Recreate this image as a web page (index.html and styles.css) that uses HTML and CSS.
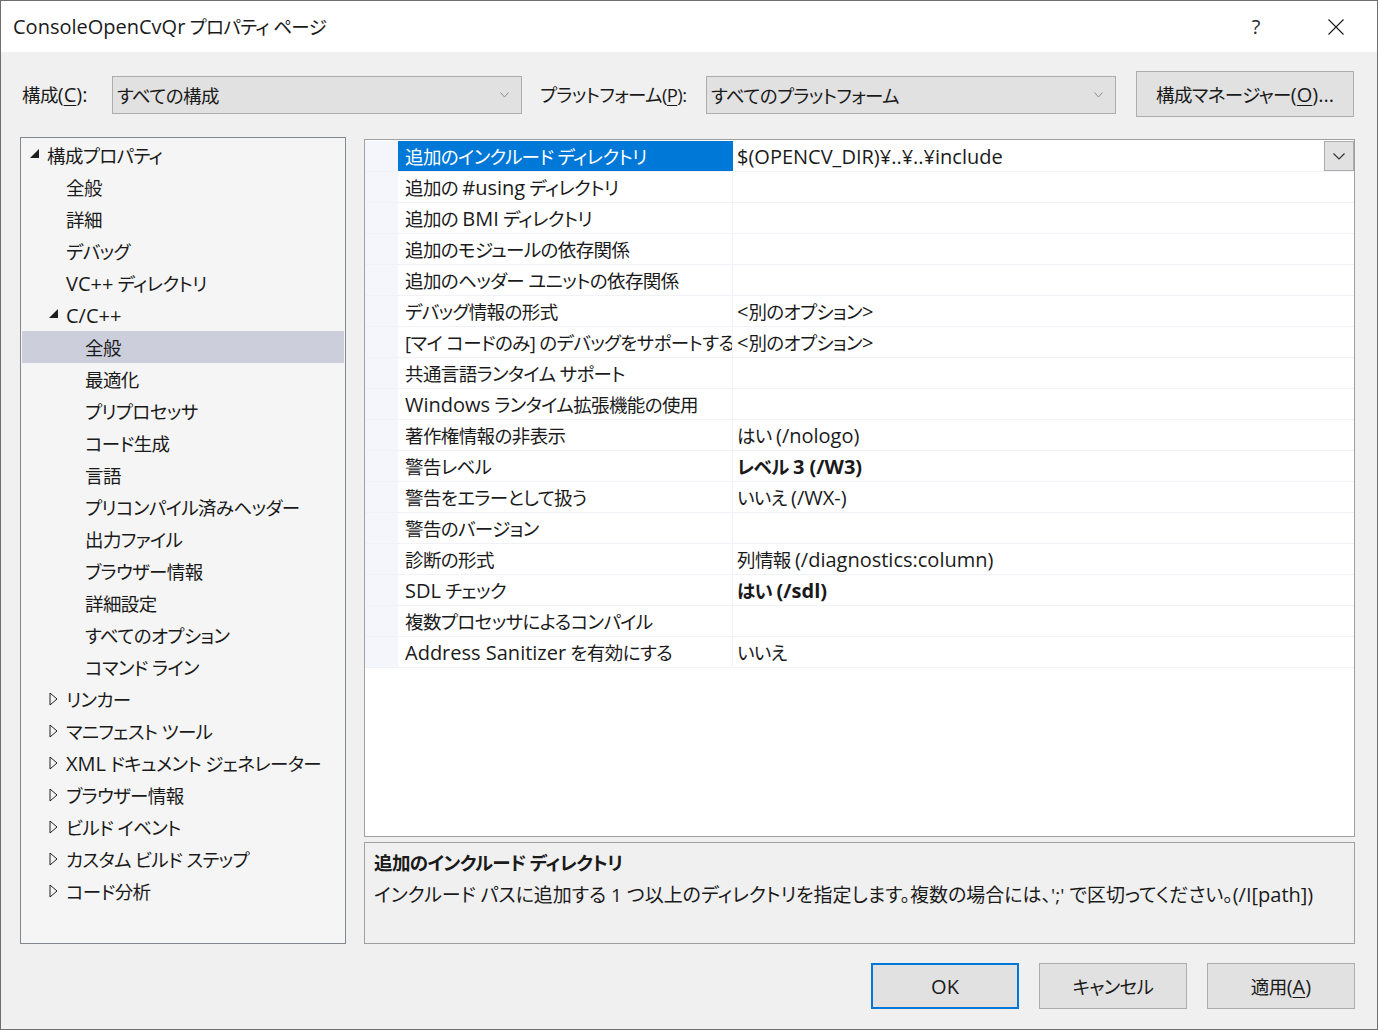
FILE: index.html
```html
<!DOCTYPE html>
<html lang="ja">
<head>
<meta charset="utf-8">
<title>ConsoleOpenCvQr プロパティ ページ</title>
<link rel="stylesheet" href="styles.css">
</head>
<body>
<div class="window">
  <div class="titlebar">
    <span class="title"><span class="en">ConsoleOpenCvQr</span> プロパティ ページ</span>
    <span class="help">?</span>
    <span class="close"><svg width="16" height="16" viewBox="0 0 16 16"><path d="M0.5 0.5 L15.5 15.5 M15.5 0.5 L0.5 15.5" stroke="#1a1a1a" stroke-width="1.1" fill="none"/></svg></span>
  </div>
  <div class="config-row">
    <span class="lbl lbl-config">構成<span class="en">(<u>C</u>):</span></span>
    <div class="combo"><span>すべての構成</span><svg class="chev" width="9" height="6" viewBox="0 0 9 6"><path d="M0.5 0.5 L4.5 5 L8.5 0.5" stroke="#8a8a8a" fill="none"/></svg></div>
    <span class="lbl lbl-platform">プラットフォーム(<u>P</u>):</span>
    <div class="combo"><span>すべてのプラットフォーム</span><svg class="chev" width="9" height="6" viewBox="0 0 9 6"><path d="M0.5 0.5 L4.5 5 L8.5 0.5" stroke="#8a8a8a" fill="none"/></svg></div>
    <div class="btn btn-manager">構成マネージャー<span class="en">(<u>O</u>)...</span></div>
  </div>
  <div class="main">
    <div class="tree">
      <div class="node l0"><span class="twisty open"><svg width="9" height="9" viewBox="0 0 9 9"><polygon points="9,0 9,9 0,9" fill="#1e1e1e"/></svg></span><span>構成プロパティ</span></div>
      <div class="node l1"><span class="twisty"></span><span>全般</span></div>
      <div class="node l1"><span class="twisty"></span><span>詳細</span></div>
      <div class="node l1"><span class="twisty"></span><span>デバッグ</span></div>
      <div class="node l1"><span class="twisty"></span><span><span class="en">VC++</span> ディレクトリ</span></div>
      <div class="node l1"><span class="twisty open"><svg width="9" height="9" viewBox="0 0 9 9"><polygon points="9,0 9,9 0,9" fill="#1e1e1e"/></svg></span><span class="en">C/C++</span></div>
      <div class="node l2 selected"><span class="twisty"></span><span>全般</span></div>
      <div class="node l2"><span class="twisty"></span><span>最適化</span></div>
      <div class="node l2"><span class="twisty"></span><span>プリプロセッサ</span></div>
      <div class="node l2"><span class="twisty"></span><span>コード生成</span></div>
      <div class="node l2"><span class="twisty"></span><span>言語</span></div>
      <div class="node l2"><span class="twisty"></span><span>プリコンパイル済みヘッダー</span></div>
      <div class="node l2"><span class="twisty"></span><span>出力ファイル</span></div>
      <div class="node l2"><span class="twisty"></span><span>ブラウザー情報</span></div>
      <div class="node l2"><span class="twisty"></span><span>詳細設定</span></div>
      <div class="node l2"><span class="twisty"></span><span>すべてのオプション</span></div>
      <div class="node l2"><span class="twisty"></span><span>コマンド ライン</span></div>
      <div class="node l1"><span class="twisty"><svg width="9" height="14" viewBox="0 0 9 14"><polygon points="1,1 8,7 1,13" fill="none" stroke="#1e1e1e" stroke-width="1"/></svg></span><span>リンカー</span></div>
      <div class="node l1"><span class="twisty"><svg width="9" height="14" viewBox="0 0 9 14"><polygon points="1,1 8,7 1,13" fill="none" stroke="#1e1e1e" stroke-width="1"/></svg></span><span>マニフェスト ツール</span></div>
      <div class="node l1"><span class="twisty"><svg width="9" height="14" viewBox="0 0 9 14"><polygon points="1,1 8,7 1,13" fill="none" stroke="#1e1e1e" stroke-width="1"/></svg></span><span><span class="en">XML</span> ドキュメント ジェネレーター</span></div>
      <div class="node l1"><span class="twisty"><svg width="9" height="14" viewBox="0 0 9 14"><polygon points="1,1 8,7 1,13" fill="none" stroke="#1e1e1e" stroke-width="1"/></svg></span><span>ブラウザー情報</span></div>
      <div class="node l1"><span class="twisty"><svg width="9" height="14" viewBox="0 0 9 14"><polygon points="1,1 8,7 1,13" fill="none" stroke="#1e1e1e" stroke-width="1"/></svg></span><span>ビルド イベント</span></div>
      <div class="node l1"><span class="twisty"><svg width="9" height="14" viewBox="0 0 9 14"><polygon points="1,1 8,7 1,13" fill="none" stroke="#1e1e1e" stroke-width="1"/></svg></span><span>カスタム ビルド ステップ</span></div>
      <div class="node l1"><span class="twisty"><svg width="9" height="14" viewBox="0 0 9 14"><polygon points="1,1 8,7 1,13" fill="none" stroke="#1e1e1e" stroke-width="1"/></svg></span><span>コード分析</span></div>
    </div>
    <div class="right">
      <div class="grid">
        <div class="row selected"><div class="gutter"></div><div class="name">追加のインクルード ディレクトリ</div><div class="value"><span class="en">$(OPENCV_DIR)¥..¥..¥include</span><span class="dd"><svg width="12" height="7" viewBox="0 0 12 7"><path d="M0.5 0.5 L6 6 L11.5 0.5" stroke="#333" fill="none" stroke-width="1.2"/></svg></span></div></div>
        <div class="row"><div class="gutter"></div><div class="name"><span>追加の <span class="en">#using</span> ディレクトリ</span></div><div class="value"></div></div>
        <div class="row"><div class="gutter"></div><div class="name"><span>追加の <span class="en">BMI</span> ディレクトリ</span></div><div class="value"></div></div>
        <div class="row"><div class="gutter"></div><div class="name">追加のモジュールの依存関係</div><div class="value"></div></div>
        <div class="row"><div class="gutter"></div><div class="name">追加のヘッダー ユニットの依存関係</div><div class="value"></div></div>
        <div class="row"><div class="gutter"></div><div class="name">デバッグ情報の形式</div><div class="value"><span><span class="en">&lt;</span>別のオプション<span class="en">&gt;</span></span></div></div>
        <div class="row"><div class="gutter"></div><div class="name">[マイ コードのみ] のデバッグをサポートする</div><div class="value"><span><span class="en">&lt;</span>別のオプション<span class="en">&gt;</span></span></div></div>
        <div class="row"><div class="gutter"></div><div class="name">共通言語ランタイム サポート</div><div class="value"></div></div>
        <div class="row"><div class="gutter"></div><div class="name"><span><span class="en">Windows</span> ランタイム拡張機能の使用</span></div><div class="value"></div></div>
        <div class="row"><div class="gutter"></div><div class="name">著作権情報の非表示</div><div class="value"><span>はい <span class="en">(/nologo)</span></span></div></div>
        <div class="row"><div class="gutter"></div><div class="name">警告レベル</div><div class="value bold"><span>レベル <span class="en">3 (/W3)</span></span></div></div>
        <div class="row"><div class="gutter"></div><div class="name">警告をエラーとして扱う</div><div class="value"><span>いいえ <span class="en">(/WX-)</span></span></div></div>
        <div class="row"><div class="gutter"></div><div class="name">警告のバージョン</div><div class="value"></div></div>
        <div class="row"><div class="gutter"></div><div class="name">診断の形式</div><div class="value"><span>列情報 <span class="en">(/diagnostics:column)</span></span></div></div>
        <div class="row"><div class="gutter"></div><div class="name"><span><span class="en">SDL</span> チェック</span></div><div class="value bold"><span>はい <span class="en">(/sdl)</span></span></div></div>
        <div class="row"><div class="gutter"></div><div class="name">複数プロセッサによるコンパイル</div><div class="value"></div></div>
        <div class="row"><div class="gutter"></div><div class="name"><span><span class="en">Address Sanitizer</span> を有効にする</span></div><div class="value">いいえ</div></div>
      </div>
      <div class="desc">
        <div class="desc-title">追加のインクルード ディレクトリ</div>
        <div class="desc-text">インクルード パスに追加する 1 つ以上のディレクトリを指定します。複数の場合には、';' で区切ってください。<span class="en">(/I[path])</span></div>
      </div>
    </div>
  </div>
  <div class="buttons">
    <div class="btn btn-ok"><span class="en">OK</span></div>
    <div class="btn">キャンセル</div>
    <div class="btn">適用<span class="en">(<u>A</u>)</span></div>
  </div>
</div>
</body>
</html>
```
FILE: styles.css
```css
* { box-sizing: border-box; }
html, body { margin: 0; padding: 0; }
body {
  font-family: "Open Sans", "Noto Sans CJK JP", sans-serif;
  font-feature-settings: "palt";
  font-size: 18.5px;
  letter-spacing: -0.6px;
  color: #1a1a1a;
  background: #ffffff;
}
.en { font-size: 20px; letter-spacing: 0; }
.window {
  width: 1378px;
  height: 1030px;
  border: 1px solid #6f6f6f;
  background: #f0f0f0;
  display: flex;
  flex-direction: column;
  overflow: hidden;
}
.titlebar {
  height: 51px;
  background: #ffffff;
  display: flex;
  align-items: center;
  padding-left: 12px;
  flex: none;
}
.title { flex: 1; line-height: 1; }
.help { width: 20px; margin-right: 62px; font-size: 20px; color: #2a2a2a; text-align: center; letter-spacing: 0; }
.close { width: 16px; height: 16px; margin-right: 33px; display: flex; }

.config-row {
  margin-top: 19px;
  height: 46px;
  display: flex;
  align-items: flex-start;
  padding-left: 21px;
  flex: none;
}
.lbl { height: 46px; display: flex; align-items: center; white-space: nowrap; }
.lbl-config { width: 90px; }
.lbl-platform { width: 166px; margin-left: 18px; }
.combo {
  margin-top: 5px;
  width: 410px;
  height: 38px;
  background: #e1e1e1;
  border: 1px solid #adadad;
  display: flex;
  align-items: center;
  padding-left: 4px;
  padding-right: 12px;
}
.combo span { flex: 1; white-space: nowrap; }
.chev { flex: none; }
.btn {
  height: 46px;
  width: 148px;
  background: #e1e1e1;
  border: 1px solid #adadad;
  display: flex;
  align-items: center;
  justify-content: center;
  white-space: nowrap;
}
.btn-manager { width: 218px; margin-left: 20px; }
u { text-decoration: underline; text-underline-offset: 3px; text-decoration-thickness: 1px; }

.main {
  margin-top: 20px;
  height: 807px;
  display: flex;
  padding-left: 19px;
  gap: 18px;
  flex: none;
}
.tree {
  width: 326px;
  height: 807px;
  background: #f5f5f5;
  border: 1px solid #828790;
  padding: 1px;
}
.node {
  height: 32px;
  display: flex;
  align-items: center;
  white-space: nowrap;
}
.node.l0 { padding-left: 7px; }
.node.l1 { padding-left: 26px; }
.node.l2 { padding-left: 45px; }
.node.selected { background: #cccedb; }
.twisty { width: 18px; height: 32px; display: flex; align-items: center; flex: none; padding-left: 1px; }
.twisty.open { padding-bottom: 3px; }

.right {
  width: 991px;
  display: flex;
  flex-direction: column;
  padding-top: 2px;
  gap: 5px;
}
.grid {
  height: 698px;
  background: #ffffff;
  border: 1px solid #a0a0a0;
  padding-top: 1px;
}
.row {
  height: 31px;
  display: flex;
  border-bottom: 1px solid #f0f2f7;
}
.gutter { width: 33px; background: #f4f6fb; flex: none; }
.name {
  width: 335px;
  flex: none;
  padding-left: 7px;
  border-right: 1px solid #f0f2f7;
  display: flex;
  align-items: center;
  white-space: nowrap;
  overflow: hidden;
}
.value {
  flex: 1;
  padding-left: 4px;
  display: flex;
  align-items: center;
  white-space: nowrap;
  position: relative;
}
.value.bold { font-weight: bold; }
.row.selected .name { background: #0078d7; color: #ffffff; border-right-color: #0078d7; }
.dd {
  position: absolute;
  right: 0;
  top: 0;
  width: 30px;
  height: 30px;
  background: #e1e1e1;
  border: 1px solid #adadad;
  display: flex;
  align-items: center;
  justify-content: center;
}
.desc {
  height: 102px;
  border: 1px solid #a0a0a0;
  background: #f0f0f0;
  padding: 6px 9px;
}
.desc-title { font-weight: bold; height: 28px; line-height: 28px; }
.desc-text { margin-top: 4px; line-height: 28px; white-space: nowrap; font-size: 19px; letter-spacing: 0; }

.buttons {
  margin-top: 19px;
  display: flex;
  justify-content: flex-end;
  gap: 20px;
  padding-right: 22px;
  flex: none;
}
.btn-ok { border: 2px solid #0078d7; }
```
